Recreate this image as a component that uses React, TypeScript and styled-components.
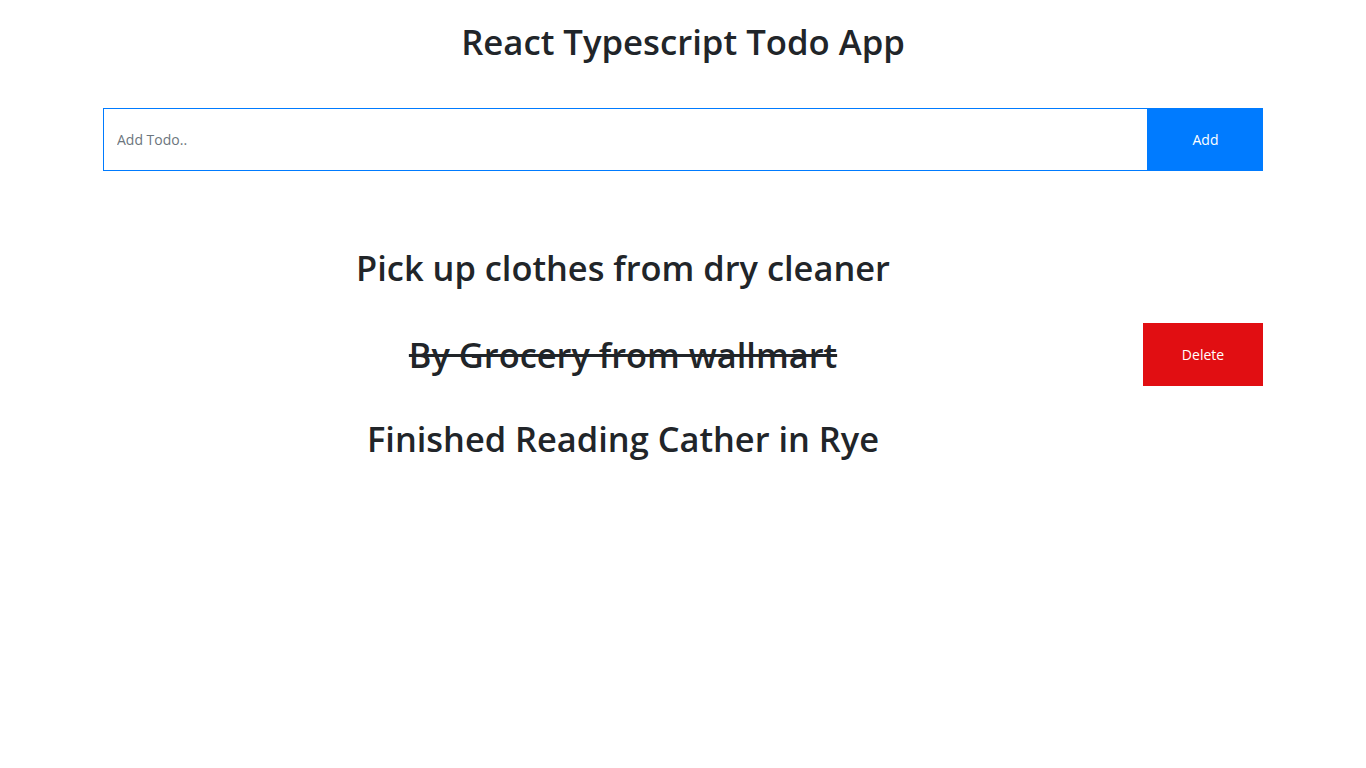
import React from "react";
import styled, { createGlobalStyle } from "styled-components";

const Global = createGlobalStyle`
  body { margin: 0; background: #fff; font-family: "Open Sans", "Noto Sans", sans-serif; color: #212529; }
  * { box-sizing: border-box; }
`;

const Page = styled.div`
  width: 1160px;
  margin: 0 auto;
  display: flex;
  flex-direction: column;
`;

const Title = styled.h1`
  margin: 0;
  height: 82px;
  display: flex;
  align-items: center;
  justify-content: center;
  font-size: 34.7px;
  font-weight: 600;
  color: #212529;
`;

const Form = styled.form`
  margin-top: 26px;
  display: flex;
  height: 63px;
`;

const Input = styled.input`
  flex: 1;
  border: 1px solid #007bff;
  padding: 0 13px;
  font-family: inherit;
  font-size: 14px;
  color: #495057;
  outline: none;
  &::placeholder { color: #6c757d; }
`;

const AddButton = styled.button`
  width: 115px;
  border: none;
  background: #007bff;
  color: #fff;
  font-family: inherit;
  font-size: 14px;
`;

const List = styled.div`
  margin-top: 52px;
  display: flex;
  flex-direction: column;
`;

const Row = styled.div`
  height: 86px;
  display: flex;
  align-items: center;
  &:first-child { height: 88px; }
  &:last-child { height: 82px; }
`;

const TodoText = styled.div<{ $done?: boolean }>`
  flex: 1;
  text-align: center;
  font-size: 34.4px;
  font-weight: 600;
  text-decoration: ${(p) => (p.$done ? "line-through" : "none")};
  text-decoration-thickness: 3px;
`;

const Spacer = styled.div`
  width: 120px;
`;

const DeleteButton = styled.button`
  width: 120px;
  height: 63px;
  border: none;
  background: #e10e12;
  color: #fff;
  font-family: inherit;
  font-size: 14px;
`;

const todos = [
  { text: "Pick up clothes from dry cleaner", done: false, hover: false },
  { text: "By Grocery from wallmart", done: true, hover: true },
  { text: "Finished Reading Cather in Rye", done: false, hover: false },
];

export default function App() {
  return (
    <>
      <Global />
      <Page>
        <Title>React Typescript Todo App</Title>
        <Form onSubmit={(e) => e.preventDefault()}>
          <Input placeholder="Add Todo.." />
          <AddButton type="submit">Add</AddButton>
        </Form>
        <List>
          {todos.map((t) => (
            <Row key={t.text}>
              <TodoText $done={t.done}>{t.text}</TodoText>
              {t.hover ? <DeleteButton>Delete</DeleteButton> : <Spacer />}
            </Row>
          ))}
        </List>
      </Page>
    </>
  );
}
